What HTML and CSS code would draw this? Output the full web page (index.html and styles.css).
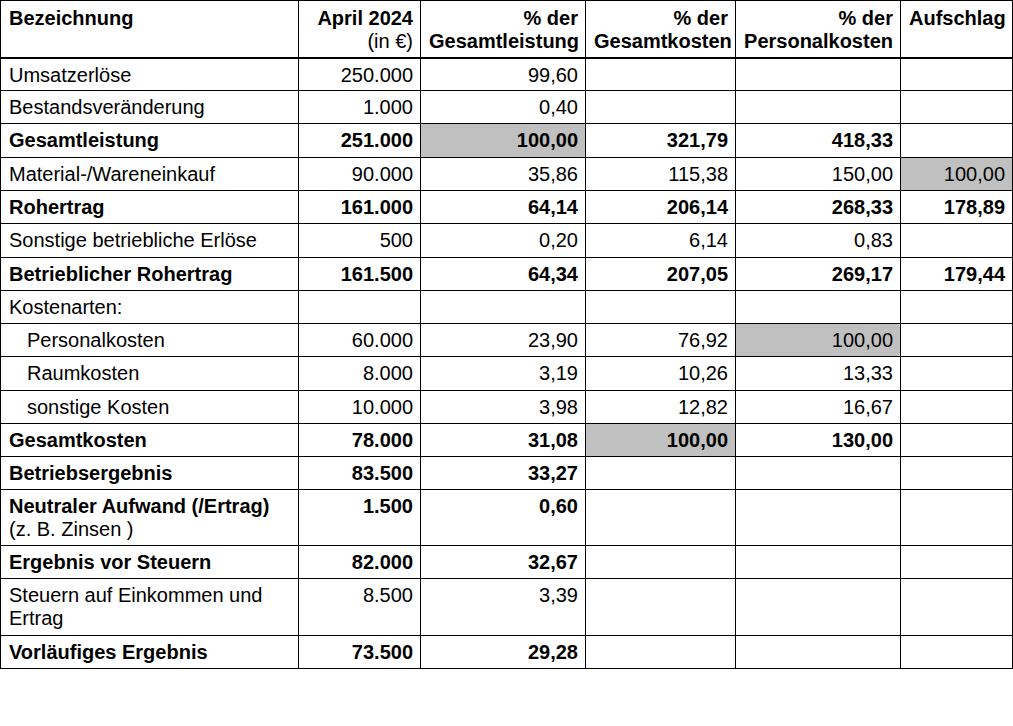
FILE: index.html
```html
<!DOCTYPE html>
<html lang="de">
<head>
<meta charset="utf-8">
<title>Ergebnisrechnung April 2024</title>
<link rel="stylesheet" href="styles.css">
</head>
<body>
<table class="report">
  <colgroup>
    <col class="c-name"><col class="c-eur"><col class="c-gl"><col class="c-gk"><col class="c-pk"><col class="c-auf">
  </colgroup>
  <thead>
    <tr class="head">
      <th class="left">Bezeichnung</th>
      <th>April 2024<br><span class="unit">(in €)</span></th>
      <th>% der<br>Gesamtleistung</th>
      <th>% der<br>Gesamtkosten</th>
      <th>% der<br>Personalkosten</th>
      <th class="left">Aufschlag</th>
    </tr>
  </thead>
  <tbody>
    <tr class="r33"><td class="left">Umsatzerlöse</td><td>250.000</td><td>99,60</td><td></td><td></td><td></td></tr>
    <tr class="r33"><td class="left">Bestandsveränderung</td><td>1.000</td><td>0,40</td><td></td><td></td><td></td></tr>
    <tr class="r34 bold"><td class="left">Gesamtleistung</td><td>251.000</td><td class="hl">100,00</td><td>321,79</td><td>418,33</td><td></td></tr>
    <tr class="r33"><td class="left">Material-/Wareneinkauf</td><td>90.000</td><td>35,86</td><td>115,38</td><td>150,00</td><td class="hl">100,00</td></tr>
    <tr class="r33 bold"><td class="left">Rohertrag</td><td>161.000</td><td>64,14</td><td>206,14</td><td>268,33</td><td>178,89</td></tr>
    <tr class="r34"><td class="left">Sonstige betriebliche Erlöse</td><td>500</td><td>0,20</td><td>6,14</td><td>0,83</td><td></td></tr>
    <tr class="r33 bold"><td class="left">Betrieblicher Rohertrag</td><td>161.500</td><td>64,34</td><td>207,05</td><td>269,17</td><td>179,44</td></tr>
    <tr class="r33"><td class="left">Kostenarten:</td><td></td><td></td><td></td><td></td><td></td></tr>
    <tr class="r33"><td class="left indent">Personalkosten</td><td>60.000</td><td>23,90</td><td>76,92</td><td class="hl">100,00</td><td></td></tr>
    <tr class="r34"><td class="left indent">Raumkosten</td><td>8.000</td><td>3,19</td><td>10,26</td><td>13,33</td><td></td></tr>
    <tr class="r33"><td class="left indent">sonstige Kosten</td><td>10.000</td><td>3,98</td><td>12,82</td><td>16,67</td><td></td></tr>
    <tr class="r33 bold"><td class="left">Gesamtkosten</td><td>78.000</td><td>31,08</td><td class="hl">100,00</td><td>130,00</td><td></td></tr>
    <tr class="r33 bold"><td class="left">Betriebsergebnis</td><td>83.500</td><td>33,27</td><td></td><td></td><td></td></tr>
    <tr class="r56"><td class="left"><b>Neutraler Aufwand (/Ertrag)</b><br>(z. B. Zinsen )</td><td class="b">1.500</td><td class="b">0,60</td><td></td><td></td><td></td></tr>
    <tr class="r33 bold"><td class="left">Ergebnis vor Steuern</td><td>82.000</td><td>32,67</td><td></td><td></td><td></td></tr>
    <tr class="r57"><td class="left">Steuern auf Einkommen und<br>Ertrag</td><td>8.500</td><td>3,39</td><td></td><td></td><td></td></tr>
    <tr class="r33 bold"><td class="left">Vorläufiges Ergebnis</td><td>73.500</td><td>29,28</td><td></td><td></td><td></td></tr>
  </tbody>
</table>
</body>
</html>
```

FILE: styles.css
```css
html, body {
  margin: 0;
  padding: 0;
  background: #ffffff;
}

body {
  font-family: "Liberation Sans", Arial, sans-serif;
  font-size: 20px;
  color: #000000;
}

.report {
  border-collapse: collapse;
  table-layout: fixed;
  width: 1012px;
  border: 1px solid #000;
}

.c-name { width: 298px; }
.c-eur { width: 122px; }
.c-gl { width: 165px; }
.c-gk { width: 150px; }
.c-pk { width: 165px; }
.c-auf { width: 112px; }

.report th,
.report td {
  border: 1px solid #000;
  padding: 5px 7px 0 8px;
  line-height: 23px;
  vertical-align: top;
  text-align: right;
  white-space: nowrap;
  box-sizing: border-box;
}

.report th {
  font-weight: bold;
}

.report .left {
  text-align: left;
}

.report .indent {
  padding-left: 26px;
}

.unit {
  font-weight: normal;
}

.head {
  height: 57px;
}

.head th {
  border-bottom: 2px solid #000;
  padding-top: 6px;
}

.r33 { height: 33px; }
.r34 { height: 34px; }
.r56 { height: 56px; }
.r57 { height: 57px; }

.bold td,
.report td.b {
  font-weight: bold;
}

.report td.hl {
  background: #c0c0c0;
}
```
